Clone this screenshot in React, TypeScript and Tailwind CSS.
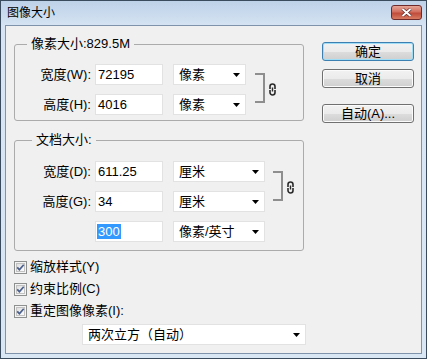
import React from 'react';

const FONT = "font-['Liberation_Sans','Noto_Sans_CJK_SC',sans-serif]";

function Dropdown({ className, children }: { className: string; children: React.ReactNode }) {
  return (
    <div className={`flex h-[21px] items-center justify-between border border-[#e2e2e2] bg-white pl-[5px] pr-[5px] ${className}`}>
      <span className="leading-[19px]">{children}</span>
      <svg width="7" height="4" viewBox="0 0 7 4">
        <path d="M0 0h7L3.5 4z" fill="#000" />
      </svg>
    </div>
  );
}

function Field({ children, selected }: { children: React.ReactNode; selected?: boolean }) {
  return (
    <div className="h-[21px] w-[68px] border border-[#e2e2e2] bg-white pl-[1px] pt-[1px] leading-[17px]">
      {selected ? <span className="bg-[#3399ff] px-[1px] text-white">{children}</span> : <span className="pl-[1px]">{children}</span>}
    </div>
  );
}

function LinkIcon() {
  return (
    <svg width="9" height="13" viewBox="0 0 9 13">
      <path d="M2 6V3.5a2.5 2.5 0 0 1 5 0V6" fill="none" stroke="#2a2a2a" strokeWidth="1.6" />
      <path d="M2 7v2.5a2.5 2.5 0 0 0 5 0V7" fill="none" stroke="#2a2a2a" strokeWidth="1.6" />
      <path d="M4.5 4.5v4" stroke="#2a2a2a" strokeWidth="1.4" />
    </svg>
  );
}

function Row({ label, children }: { label: string; children: React.ReactNode }) {
  return (
    <div className="flex h-[21px] items-center">
      <div className="w-[76px] text-right">{label}</div>
      <div className="ml-[4px] flex items-center gap-[10px]">{children}</div>
    </div>
  );
}

function Check({ label }: { label: string }) {
  return (
    <div className="flex h-[22px] items-center">
      <svg width="13" height="13" viewBox="0 0 13 13">
        <defs>
          <linearGradient id="cb" x1="0" y1="0" x2="1" y2="1">
            <stop offset="0" stopColor="#dcdcdc" />
            <stop offset="1" stopColor="#ffffff" />
          </linearGradient>
        </defs>
        <rect x="0.5" y="0.5" width="12" height="12" fill="#f4f4f4" stroke="#8e8f8f" />
        <rect x="2.5" y="2.5" width="8" height="8" fill="url(#cb)" stroke="#c2c2c2" />
        <path d="M3.2 6.4l2.2 2.3 4.3-5" fill="none" stroke="#4a5f8c" strokeWidth="1.7" />
      </svg>
      <span className="ml-[3px]">{label}</span>
    </div>
  );
}

function Btn({ children, primary, className }: { children: React.ReactNode; primary?: boolean; className?: string }) {
  return (
    <div
      className={`flex h-[19px] w-[92px] items-center justify-center rounded-[3px] border bg-[linear-gradient(to_bottom,#f2f2f2_0%,#ebebeb_50%,#dddddd_50%,#cfcfcf_100%)] leading-none ${
        primary ? 'border-[#3c7fb1] shadow-[inset_0_0_0_1px_#9fdcf6]' : 'border-[#707070] shadow-[inset_0_0_0_1px_#fbfbfb]'
      } ${className ?? ''}`}
    >
      {children}
    </div>
  );
}

export default function App() {
  return (
    <div className={`${FONT} flex h-[359px] w-[427px] flex-col border border-[#3b4b5e] bg-[linear-gradient(to_bottom,#bdd1e8_0px,#d6e4f3_25px,#d9e7f5_100%)] text-[13px] text-black`}>
      <div className="flex h-[24px] shrink-0 items-start justify-between pl-[6px] pr-[4px]">
        <span className="mt-[4px] text-[12px] leading-[16px]">图像大小</span>
        <div className="mt-[4px] flex h-[15px] w-[31px] items-center justify-center rounded-[3px] border border-[#6e2a2a] bg-[linear-gradient(to_bottom,#e6a596_0%,#d26f5f_45%,#c04c3c_55%,#d77b62_100%)]">
          <svg width="11" height="9" viewBox="0 0 11 9">
            <path d="M1.5 1l8 7M9.5 1l-8 7" stroke="#5a2a2a" strokeWidth="3.2" />
            <path d="M1.5 1l8 7M9.5 1l-8 7" stroke="#ffffff" strokeWidth="1.8" />
          </svg>
        </div>
      </div>
      <div className="mx-[4px] mb-[4px] flex flex-1 border border-[#7f93aa] bg-[#f0f0f0] pl-[8px]">
        <div className="flex w-[290px] flex-col">
          <fieldset className="mt-[10px] rounded-[3px] border border-[#ababab]">
            <legend className="ml-[12px] px-[4px] leading-[16px]">像素大小:829.5M</legend>
            <div className="flex items-start pb-[5px] pt-[12px]">
              <div className="flex flex-col gap-[9px]">
                <Row label="宽度(W):">
                  <Field>72195</Field>
                  <Dropdown className="w-[73px]">像素</Dropdown>
                </Row>
                <Row label="高度(H):">
                  <Field>4016</Field>
                  <Dropdown className="w-[73px]">像素</Dropdown>
                </Row>
              </div>
              <div className="ml-[9px] mt-[9px] flex items-center">
                <div className="h-[30px] w-[10px] border-y-2 border-r-2 border-[#8e8e8e]" />
                <div className="ml-[3px] mt-[2px]">
                  <LinkIcon />
                </div>
              </div>
            </div>
          </fieldset>
          <fieldset className="mt-[11px] rounded-[3px] border border-[#ababab]">
            <legend className="ml-[17px] px-[4px] leading-[16px]">文档大小:</legend>
            <div className="flex items-start pb-[8px] pt-[13px]">
              <div className="flex flex-col gap-[9px]">
                <Row label="宽度(D):">
                  <Field>611.25</Field>
                  <Dropdown className="w-[92px]">厘米</Dropdown>
                </Row>
                <Row label="高度(G):">
                  <Field>34</Field>
                  <Dropdown className="w-[92px]">厘米</Dropdown>
                </Row>
                <Row label="">
                  <Field selected>300</Field>
                  <Dropdown className="w-[92px]">像素/英寸</Dropdown>
                </Row>
              </div>
              <div className="ml-[8px] mt-[10px] flex items-center">
                <div className="h-[30px] w-[10px] border-y-2 border-r-2 border-[#8e8e8e]" />
                <div className="ml-[3px] mt-[2px]">
                  <LinkIcon />
                </div>
              </div>
            </div>
          </fieldset>
          <div className="mt-[5px] flex flex-col">
            <Check label="缩放样式(Y)" />
            <Check label="约束比例(C)" />
            <Check label="重定图像像素(I):" />
          </div>
          <Dropdown className="ml-[68px] mt-[2px] w-[224px]">两次立方（自动）</Dropdown>
        </div>
        <div className="ml-[18px] mt-[16px] flex flex-col">
          <Btn primary>确定</Btn>
          <Btn className="mt-[8px]">取消</Btn>
          <Btn className="mt-[16px]">自动(A)...</Btn>
        </div>
      </div>
    </div>
  );
}
